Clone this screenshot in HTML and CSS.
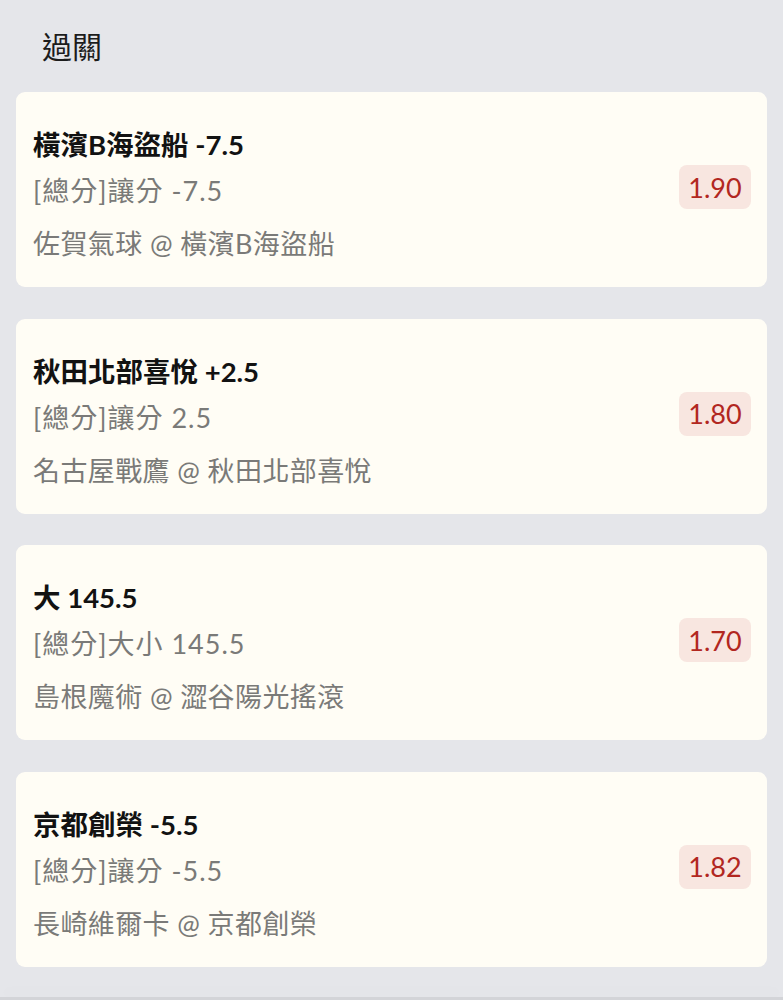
FILE: index.html
```html
<!DOCTYPE html>
<html lang="zh-Hant">
<head>
<meta charset="utf-8">
<title>過關</title>
<link rel="stylesheet" href="styles.css">
</head>
<body>
<div class="page">
  <h1 class="heading">過關</h1>
  <div class="list">
    <div class="card">
      <div class="info">
        <div class="pick">橫濱B海盜船 -7.5</div>
        <div class="market">[總分]讓分 -7.5</div>
        <div class="match">佐賀氣球 @ 橫濱B海盜船</div>
      </div>
      <div class="odds">1.90</div>
    </div>
    <div class="card">
      <div class="info">
        <div class="pick">秋田北部喜悅 +2.5</div>
        <div class="market">[總分]讓分 2.5</div>
        <div class="match">名古屋戰鷹 @ 秋田北部喜悅</div>
      </div>
      <div class="odds">1.80</div>
    </div>
    <div class="card">
      <div class="info">
        <div class="pick">大 145.5</div>
        <div class="market">[總分]大小 145.5</div>
        <div class="match">島根魔術 @ 澀谷陽光搖滾</div>
      </div>
      <div class="odds">1.70</div>
    </div>
    <div class="card">
      <div class="info">
        <div class="pick">京都創榮 -5.5</div>
        <div class="market">[總分]讓分 -5.5</div>
        <div class="match">長崎維爾卡 @ 京都創榮</div>
      </div>
      <div class="odds">1.82</div>
    </div>
  </div>
</div>
<div class="bottom-bar"></div>
</body>
</html>
```

FILE: styles.css
```css
html, body {
  margin: 0;
  padding: 0;
  background: #e5e6ea;
}
body {
  font-family: Lato, "Noto Sans CJK TC", sans-serif;
  width: 783px;
  height: 1000px;
  overflow: hidden;
}
.page {
  padding: 28px 16px 0 16px;
}
.heading {
  margin: 0 0 28px 26px;
  font-size: 30px;
  line-height: 36px;
  font-weight: 400;
  color: #1c1c1c;
}
.list {
  display: flex;
  flex-direction: column;
  gap: 31.5px;
}
.card {
  height: 195px;
  box-sizing: border-box;
  background: #fffdf5;
  border-radius: 9px;
  padding: 36px 16px 26px 17px;
  display: flex;
  align-items: flex-start;
  justify-content: space-between;
}
.info {
  display: flex;
  flex-direction: column;
}
.pick {
  font-size: 27.5px;
  line-height: 34px;
  font-weight: 700;
  color: #121212;
}
.market {
  margin-top: 12px;
  font-size: 27px;
  line-height: 34px;
  color: #7a7a78;
  letter-spacing: 1px;
}
.match {
  margin-top: 19px;
  font-size: 27px;
  line-height: 34px;
  color: #7a7a78;
  letter-spacing: 0.4px;
}
.odds {
  width: 72px;
  height: 44px;
  margin-top: 37px;
  border-radius: 8px;
  background: #f8e6e0;
  color: #b2271f;
  font-size: 27px;
  display: flex;
  align-items: center;
  justify-content: center;
}
.bottom-bar {
  position: fixed;
  left: 0;
  right: 0;
  top: 997px;
  height: 3px;
  background: #d3d4d8;
  box-shadow: 0 -6px 14px rgba(0, 0, 0, 0.03);
}
```
